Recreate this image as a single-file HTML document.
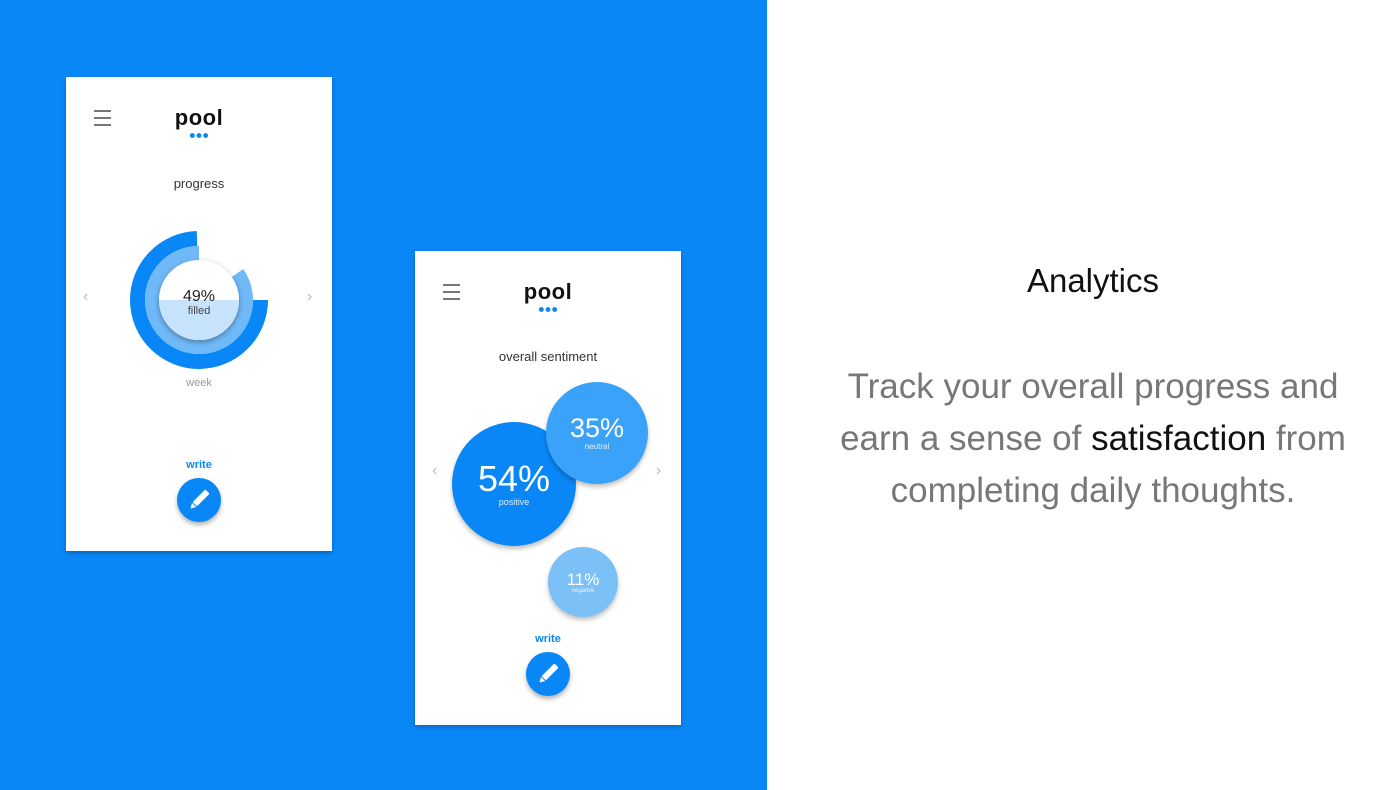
<!DOCTYPE html>
<html><head><meta charset="utf-8"><style>
*{margin:0;padding:0;box-sizing:border-box}
body{width:1400px;height:790px;position:relative;overflow:hidden;background:#fff;font-family:"Liberation Sans",sans-serif}
.blue{position:absolute;left:0;top:0;width:767px;height:790px;background:#0a87f7}
.ph{position:absolute;width:266px;height:474px;background:#fff;box-shadow:0 2px 4px rgba(0,0,0,.25)}
.ph>*{position:absolute}
.ham{left:28px;top:33px;width:17px;height:16px;border-top:2px solid #777;border-bottom:2px solid #777}
.ham:after{content:"";position:absolute;left:0;right:0;top:5px;height:2px;background:#777}
.logo{left:0;width:266px;top:28px;text-align:center;font-size:22px;font-weight:bold;color:#111;letter-spacing:.5px}
.dots{left:123px;top:56px;width:20px;height:5px;background:radial-gradient(circle,#0a87f7 2.2px,transparent 2.6px) 0 0/6.67px 5px repeat-x}
.ttl{left:0;width:266px;text-align:center;font-size:13px;color:#333}
.chev{font-size:16px;color:#bbb;top:211px}
.wr{left:0;width:266px;top:382px;text-align:center;font-size:11px;font-weight:bold;color:#0a87f7}
.fab{left:111px;top:401px;width:44px;height:44px;border-radius:50%;background:#0a87f7;box-shadow:0 3px 5px rgba(0,0,0,.3)}
.bub{border-radius:50%;color:#fff;text-align:center;display:flex;flex-direction:column;justify-content:center;align-items:center;box-shadow:0 3px 5px rgba(0,0,0,.25)}
.rt{position:absolute;left:800px;width:586px;text-align:center}
</style></head><body>
<div class="blue"></div>

<div class="ph" style="left:66px;top:77px">
 <div class="ham"></div>
 <div class="logo">pool</div>
 <div class="dots"></div>
 <div class="ttl" style="top:99px">progress</div>
 <div class="chev" style="left:17px">&#8249;</div>
 <div class="chev" style="left:241px">&#8250;</div>
 <svg style="left:0;top:0" width="266" height="474">
  <defs><filter id="sh" x="-30%" y="-30%" width="160%" height="160%"><feDropShadow dx="0" dy="2" stdDeviation="3" flood-opacity=".35"/></filter></defs>
  <path d="M131 161.5 A61.5 61.5 0 1 0 194.5 223" fill="none" stroke="#0a87f7" stroke-width="15"/>
  <path d="M133 176 A47 47 0 1 0 171.5 196" fill="none" stroke="#70b9f8" stroke-width="14"/>
  <circle cx="133" cy="223" r="40" fill="#fff" filter="url(#sh)"/>
  <path d="M93 223 A40 40 0 0 0 173 223 Z" fill="#c6e3fb"/>
  <text x="133" y="224" text-anchor="middle" font-size="16" fill="#222" font-family="Liberation Sans">49%</text>
  <text x="133" y="237" text-anchor="middle" font-size="11" fill="#444" font-family="Liberation Sans">filled</text>
  <text x="133" y="309" text-anchor="middle" font-size="11" fill="#999" font-family="Liberation Sans">week</text>
 </svg>
 <div class="wr">write</div>
 <div class="fab"><svg width="44" height="44"><g transform="rotate(45 22 22)" fill="#fff"><rect x="19" y="10" width="6" height="18" rx="1"/><path d="M19 29 L25 29 L22 34 Z"/></g></svg></div>
</div>

<div class="ph" style="left:415px;top:251px">
 <div class="ham"></div>
 <div class="logo">pool</div>
 <div class="dots"></div>
 <div class="ttl" style="top:98px">overall sentiment</div>
 <div class="chev" style="left:17px">&#8249;</div>
 <div class="chev" style="left:241px">&#8250;</div>
 <div class="bub" style="left:37px;top:171px;width:124px;height:124px;background:#0a87f7"><div style="font-size:36px;line-height:36px">54%</div><div style="font-size:9px;opacity:.85">positive</div></div>
 <div class="bub" style="left:131px;top:131px;width:102px;height:102px;background:#3aa2f8"><div style="font-size:27px;line-height:27px">35%</div><div style="font-size:8px;opacity:.85">neutral</div></div>
 <div class="bub" style="left:133px;top:296px;width:70px;height:70px;background:#7cc0f8"><div style="font-size:17px;line-height:17px">11%</div><div style="font-size:6px;opacity:.85">negative</div></div>
 <div class="wr">write</div>
 <div class="fab"><svg width="44" height="44"><g transform="rotate(45 22 22)" fill="#fff"><rect x="19" y="10" width="6" height="18" rx="1"/><path d="M19 29 L25 29 L22 34 Z"/></g></svg></div>
</div>

<div class="rt" style="top:262px;font-size:33px;color:#111">Analytics</div>
<div class="rt" style="top:361px;font-size:35px;line-height:52px;color:#777">Track your overall progress and<br>earn a sense of <span style="color:#111">satisfaction</span> from<br>completing daily thoughts.</div>
</body></html>
